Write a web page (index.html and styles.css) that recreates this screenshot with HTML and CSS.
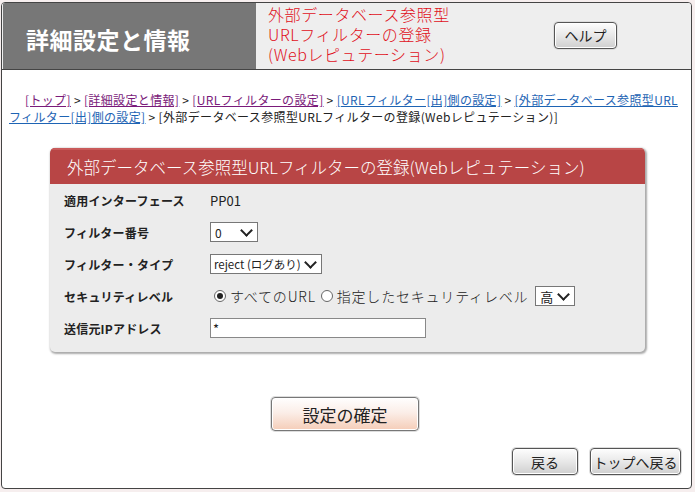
FILE: index.html
```html
<!DOCTYPE html>
<html lang="ja">
<head>
<meta charset="utf-8">
<title>外部データベース参照型URLフィルターの登録</title>
<link rel="stylesheet" href="styles.css">
</head>
<body>
<div class="frame">
  <div class="header">
    <div class="hd-title">詳細設定と情報</div>
    <div class="hd-sub">
      <div class="hd-page">外部データベース参照型<br>URLフィルターの登録<br>(Webレピュテーション)</div>
      <button class="btn btn-help">ヘルプ</button>
    </div>
  </div>
  <div class="crumbs">
    <a class="v" href="#">[トップ]</a> &gt; <a class="v" href="#">[詳細設定と情報]</a> &gt; <a class="v" href="#">[URLフィルターの設定]</a> &gt; <a class="l" href="#">[URLフィルター[出]側の設定]</a> &gt; <a class="l" href="#">[外部データベース参照型URLフィルター[出]側の設定]</a> &gt; [外部データベース参照型URLフィルターの登録(Webレピュテーション)]
  </div>
  <div class="panel">
    <div class="panel-hd">外部データベース参照型URLフィルターの登録(Webレピュテーション)</div>
    <div class="panel-bd">
      <div class="row"><div class="lbl">適用インターフェース</div><div class="val">PP01</div></div>
      <div class="row"><div class="lbl">フィルター番号</div><div class="val"><span class="sel sel-num">0<span class="chev"></span></span></div></div>
      <div class="row"><div class="lbl">フィルター・タイプ</div><div class="val"><span class="sel sel-type">reject (ログあり)<span class="chev"></span></span></div></div>
      <div class="row"><div class="lbl">セキュリティレベル</div><div class="val radios"><span class="radio on"></span><span class="rtext">すべてのURL</span><span class="radio"></span><span class="rtext">指定したセキュリティレベル</span><span class="sel sel-lv">高<span class="chev"></span></span></div></div>
      <div class="row"><div class="lbl">送信元IPアドレス</div><div class="val"><span class="input">*</span></div></div>
    </div>
  </div>
  <div class="confirm-wrap"><button class="btn btn-confirm">設定の確定</button></div>
  <div class="nav"><button class="btn btn-nav btn-back">戻る</button><button class="btn btn-nav btn-top">トップへ戻る</button></div>
</div>
</body>
</html>
```
FILE: styles.css
```css
html, body { margin: 0; padding: 0; }
body {
  background: #f6eeee;
  font-family: "Noto Sans CJK JP", "Noto Sans", sans-serif;
  color: #222;
  width: 695px;
  height: 492px;
  overflow: hidden;
}
.frame {
  margin: 2px 1px 0 1px;
  width: 691px;
  height: 487px;
  border: 1px solid #444;
  border-radius: 4px;
  background: #fff;
  overflow: hidden;
  box-sizing: border-box;
  display: flex;
  flex-direction: column;
}
.header {
  display: flex;
  height: 67px;
  border-bottom: 1px solid #444;
  flex: none;
  padding: 0 0 0 1px;
  box-sizing: border-box;
  background: #eee;
}
.hd-title {
  width: 253px;
  background: #777;
  color: #fff;
  font-size: 23px;
  font-weight: bold;
  display: flex;
  align-items: center;
  padding-left: 23px;
  padding-top: 6px;
  box-sizing: border-box;
  letter-spacing: 0.5px;
}
.hd-sub {
  flex: 1;
  display: flex;
  align-items: center;
  padding-left: 12px;
}
.hd-page {
  color: #e0101a;
  font-size: 16px;
  line-height: 20px;
  width: 286px;
  margin-top: -4px;
  letter-spacing: 0.6px;
  font-weight: 300;
}
.btn {
  font-family: "Noto Sans CJK JP", "Noto Sans", sans-serif;
  color: #222;
  border: 1px solid #555;
  border-radius: 4px;
  background: linear-gradient(#fdfdfd, #e8e8e8 50%, #cfcfcf);
  box-shadow: 0 0 0 1px #ddd, inset 0 0 0 1px #fff;
  padding: 0;
  cursor: pointer;
}
.btn-help {
  width: 63px;
  height: 27px;
  font-size: 14px;
  margin-top: -2px;
}
.crumbs {
  font-size: 12px;
  line-height: 17px;
  padding: 21px 8px 0 7px;
  text-indent: 16px;
  color: #222;
  letter-spacing: 0.35px;
}
.crumbs a { text-decoration: underline; }
.crumbs a.v { color: #7a1a7a; }
.crumbs a.l { color: #1e64b4; }
.panel {
  margin: 23px 46px 0 48px;
  border-radius: 5px;
  box-shadow: 1px 1px 2px 1px #aaa;
  background: #ececec;
  overflow: hidden;
}
.panel-hd {
  background: #b84545;
  color: #fff;
  height: 36px;
  font-size: 16.5px;
  font-weight: 300;
  display: flex;
  align-items: center;
  padding-left: 17px;
  border-top: 2px solid #c95a5a;
  box-sizing: border-box;
}
.panel-bd {
  padding: 0 14px 8px 14px;
}
.row {
  display: flex;
  align-items: center;
  height: 32px;
}
.lbl {
  width: 146px;
  font-size: 12px;
  font-weight: bold;
  letter-spacing: 0.2px;
}
.val {
  font-size: 13px;
  display: flex;
  align-items: center;
}
.sel {
  display: inline-flex;
  align-items: center;
  background: #fff;
  border: 1px solid #777;
  height: 20px;
  box-sizing: border-box;
  font-size: 12px;
  padding: 0 4px;
  justify-content: space-between;
}
.sel-num { width: 48px; }
.sel-type { width: 112px; padding-left: 3px; font-size: 11.5px; }
.sel-lv { width: 40px; margin-left: 6px; font-size: 13px; }
.chev {
  width: 7px;
  height: 7px;
  border-right: 2px solid #222;
  border-bottom: 2px solid #222;
  transform: rotate(45deg);
  margin-top: -4px;
  margin-right: 2px;
  flex: none;
}
.radios { font-size: 14px; }
.radio {
  width: 12px;
  height: 12px;
  border: 1px solid #666;
  border-radius: 50%;
  background: #fff;
  box-sizing: border-box;
  margin: 0 4px 0 4px;
  position: relative;
}
.radio.on::after {
  content: "";
  position: absolute;
  left: 2px; top: 2px;
  width: 6px; height: 6px;
  border-radius: 50%;
  background: #222;
}
.rtext { margin-right: 1px; font-weight: 300; letter-spacing: 0.8px; }
.input {
  display: inline-block;
  width: 216px;
  height: 20px;
  box-sizing: border-box;
  background: #fff;
  border: 1px solid #888;
  font-size: 13px;
  line-height: 20px;
  padding-left: 2px;
}
.confirm-wrap {
  display: flex;
  justify-content: center;
  margin-top: 45px;
  padding-right: 3px;
}
.btn-confirm {
  width: 148px;
  height: 34px;
  font-size: 17px;
  background: linear-gradient(#fffefe, #fbeee8 45%, #f5cdb8);
  border-color: #777;
}
.nav {
  display: flex;
  justify-content: flex-end;
  gap: 12px;
  margin-top: 17px;
  padding-right: 10px;
}
.btn-nav {
  height: 27px;
  font-size: 14px;
}
.btn-back { width: 66px; }
.btn-top { width: 91px; }
```
